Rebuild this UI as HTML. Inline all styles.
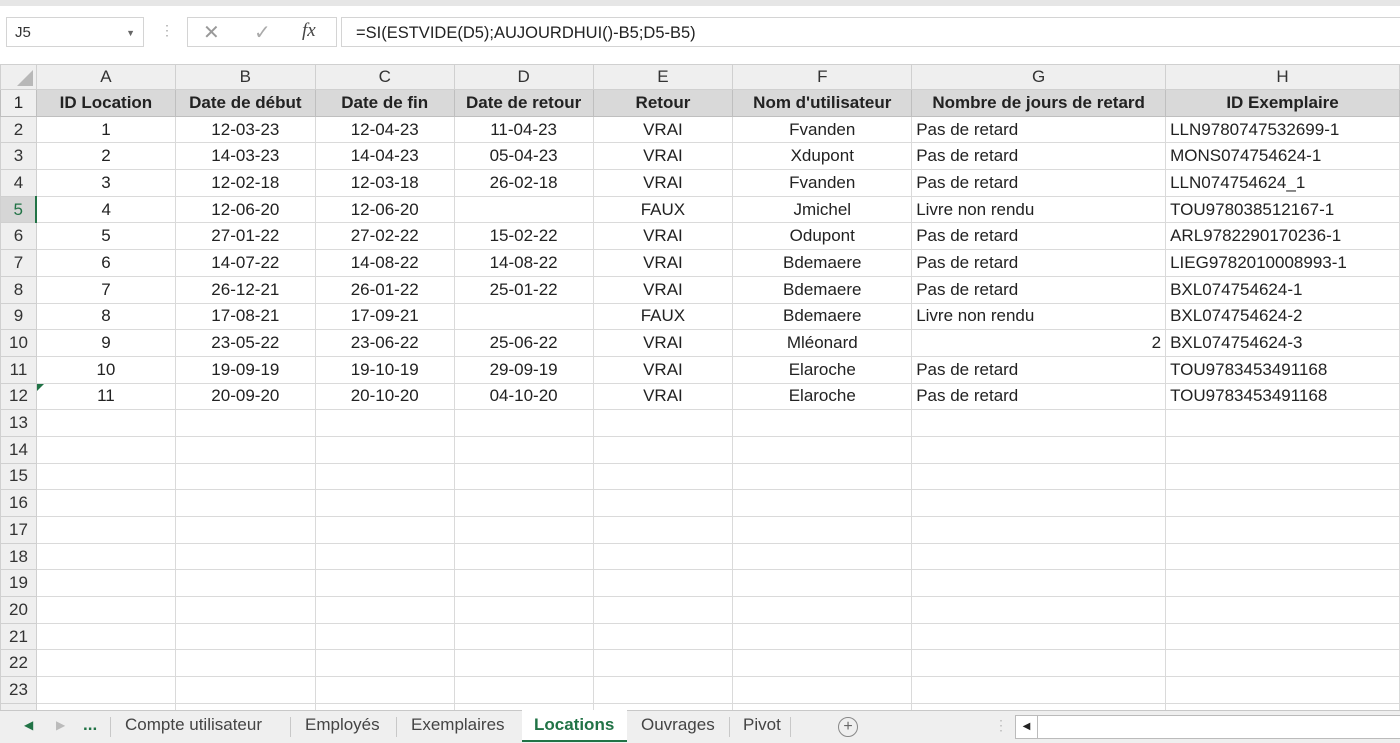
<!DOCTYPE html>
<html><head><meta charset="utf-8"><style>
body{margin:0;width:1400px;height:742px;overflow:hidden;background:#fff;font-family:"Liberation Sans",sans-serif;position:relative}
.top{position:absolute;left:0;top:0;width:1400px;height:64px;background:#fff}
.strip{position:absolute;left:0;top:0;width:1400px;height:6px;background:#e6e6e6}
.nb{position:absolute;left:6px;top:17px;width:138px;height:30px;border:1px solid #d4d4d4;background:#fff;font-size:15px;color:#333;line-height:30px;box-sizing:border-box;padding-left:8px}
.fb{position:absolute;top:17px;height:30px;border:1px solid #d4d4d4;background:#fff;box-sizing:border-box}
table{position:absolute;left:0;top:64px;border-collapse:collapse;table-layout:fixed;font-size:17px;color:#222}
td{border:1px solid #dadada;padding:0 4px;white-space:nowrap;overflow:hidden;text-align:center;height:26.7px;box-sizing:border-box;line-height:24px}
tr.ch td{background:#efefef;color:#333;height:25px;border-color:#d0d0d0;font-size:17px}
td.rh{background:#efefef;color:#333;border-color:#d0d0d0;padding:0;font-size:17px}
tr.h1 td{background:#d9d9d9;font-weight:bold;color:#222;border-color:#bfbfbf}
tr.h1 td.rh{background:#efefef;font-weight:normal}
td.l{text-align:left}
td.r{text-align:right}
.tabs{position:absolute;left:0;top:710px;width:1400px;height:32px;background:#efefef;border-top:1px solid #c8c8c8;font-size:17px;color:#444}
.tab{position:absolute;top:0;height:30px;line-height:28px}
.sep{position:absolute;top:6px;width:1px;height:20px;background:#c8c8c8}
</style></head><body>
<div class="top"></div><div class="strip"></div>
<div class="nb">J5<span style="position:absolute;right:8px;top:0;font-size:9px;color:#666">▼</span></div>
<div style="position:absolute;left:160px;top:22px;color:#aaa;font-size:14px">⋮</div>
<div class="fb" style="left:187px;width:150px"><span style="position:absolute;left:15px;top:2px;color:#999;font-size:20px">✕</span><span style="position:absolute;left:66px;top:2px;color:#aaa;font-size:20px">✓</span><span style="position:absolute;left:114px;top:2px;font-family:'Liberation Serif',serif;font-style:italic;font-size:19px;color:#444">fx</span></div>
<div class="fb" style="left:341px;width:1070px;font-size:16.5px;color:#222;line-height:30px;padding-left:14px">=SI(ESTVIDE(D5);AUJOURDHUI()-B5;D5-B5)</div>
<table>
<colgroup><col style="width:36px"><col style="width:139px"><col style="width:140px"><col style="width:139px"><col style="width:139px"><col style="width:140px"><col style="width:179px"><col style="width:254px"><col style="width:234px"></colgroup>
<tr class="ch"><td class="rh"><svg width="22" height="20" style="display:block;margin:2px 0 0 12px"><polygon points="20,2 20,18 4,18" fill="#b8b8b8"/></svg></td><td>A</td><td>B</td><td>C</td><td>D</td><td>E</td><td>F</td><td>G</td><td>H</td></tr>
<tr class="h1"><td class="rh">1</td><td>ID Location</td><td>Date de début</td><td>Date de fin</td><td>Date de retour</td><td>Retour</td><td>Nom d'utilisateur</td><td>Nombre de jours de retard</td><td>ID Exemplaire</td></tr>
<tr><td class="rh">2</td><td>1</td><td>12-03-23</td><td>12-04-23</td><td>11-04-23</td><td>VRAI</td><td>Fvanden</td><td class="l">Pas de retard</td><td class="l">LLN9780747532699-1</td></tr>
<tr><td class="rh">3</td><td>2</td><td>14-03-23</td><td>14-04-23</td><td>05-04-23</td><td>VRAI</td><td>Xdupont</td><td class="l">Pas de retard</td><td class="l">MONS074754624-1</td></tr>
<tr><td class="rh">4</td><td>3</td><td>12-02-18</td><td>12-03-18</td><td>26-02-18</td><td>VRAI</td><td>Fvanden</td><td class="l">Pas de retard</td><td class="l">LLN074754624_1</td></tr>
<tr><td class="rh" style="background:#d6d6d6;color:#217346;border-right:2px solid #217346">5</td><td>4</td><td>12-06-20</td><td>12-06-20</td><td></td><td>FAUX</td><td>Jmichel</td><td class="l">Livre non rendu</td><td class="l">TOU978038512167-1</td></tr>
<tr><td class="rh">6</td><td>5</td><td>27-01-22</td><td>27-02-22</td><td>15-02-22</td><td>VRAI</td><td>Odupont</td><td class="l">Pas de retard</td><td class="l">ARL9782290170236-1</td></tr>
<tr><td class="rh">7</td><td>6</td><td>14-07-22</td><td>14-08-22</td><td>14-08-22</td><td>VRAI</td><td>Bdemaere</td><td class="l">Pas de retard</td><td class="l">LIEG9782010008993-1</td></tr>
<tr><td class="rh">8</td><td>7</td><td>26-12-21</td><td>26-01-22</td><td>25-01-22</td><td>VRAI</td><td>Bdemaere</td><td class="l">Pas de retard</td><td class="l">BXL074754624-1</td></tr>
<tr><td class="rh">9</td><td>8</td><td>17-08-21</td><td>17-09-21</td><td></td><td>FAUX</td><td>Bdemaere</td><td class="l">Livre non rendu</td><td class="l">BXL074754624-2</td></tr>
<tr><td class="rh">10</td><td>9</td><td>23-05-22</td><td>23-06-22</td><td>25-06-22</td><td>VRAI</td><td>Mléonard</td><td class="r">2</td><td class="l">BXL074754624-3</td></tr>
<tr><td class="rh">11</td><td>10</td><td>19-09-19</td><td>19-10-19</td><td>29-09-19</td><td>VRAI</td><td>Elaroche</td><td class="l">Pas de retard</td><td class="l">TOU9783453491168</td></tr>
<tr><td class="rh">12</td><td style="position:relative">11<span style="position:absolute;left:0;top:0;width:0;height:0;border-top:7px solid #217346;border-right:7px solid transparent"></span></td><td>20-09-20</td><td>20-10-20</td><td>04-10-20</td><td>VRAI</td><td>Elaroche</td><td class="l">Pas de retard</td><td class="l">TOU9783453491168</td></tr>
<tr><td class="rh">13</td><td></td><td></td><td></td><td></td><td></td><td></td><td></td><td></td></tr>
<tr><td class="rh">14</td><td></td><td></td><td></td><td></td><td></td><td></td><td></td><td></td></tr>
<tr><td class="rh">15</td><td></td><td></td><td></td><td></td><td></td><td></td><td></td><td></td></tr>
<tr><td class="rh">16</td><td></td><td></td><td></td><td></td><td></td><td></td><td></td><td></td></tr>
<tr><td class="rh">17</td><td></td><td></td><td></td><td></td><td></td><td></td><td></td><td></td></tr>
<tr><td class="rh">18</td><td></td><td></td><td></td><td></td><td></td><td></td><td></td><td></td></tr>
<tr><td class="rh">19</td><td></td><td></td><td></td><td></td><td></td><td></td><td></td><td></td></tr>
<tr><td class="rh">20</td><td></td><td></td><td></td><td></td><td></td><td></td><td></td><td></td></tr>
<tr><td class="rh">21</td><td></td><td></td><td></td><td></td><td></td><td></td><td></td><td></td></tr>
<tr><td class="rh">22</td><td></td><td></td><td></td><td></td><td></td><td></td><td></td><td></td></tr>
<tr><td class="rh">23</td><td></td><td></td><td></td><td></td><td></td><td></td><td></td><td></td></tr>
<tr><td class="rh">24</td><td></td><td></td><td></td><td></td><td></td><td></td><td></td><td></td></tr>
</table>
<div class="tabs">
<span class="tab" style="left:24px;color:#217346;font-size:12px">◀</span>
<span class="tab" style="left:56px;color:#bbb;font-size:12px">▶</span>
<span class="tab" style="left:83px;color:#217346;font-weight:bold">...</span>
<div class="sep" style="left:110px"></div>
<span class="tab" style="left:125px">Compte utilisateur</span>
<div class="sep" style="left:290px"></div>
<span class="tab" style="left:305px">Employés</span>
<div class="sep" style="left:396px"></div>
<span class="tab" style="left:411px">Exemplaires</span>
<div style="position:absolute;left:522px;top:-1px;width:105px;height:30px;background:#fff;border-bottom:2px solid #217346"></div>
<span class="tab" style="left:534px;color:#217346;font-weight:bold">Locations</span>
<span class="tab" style="left:641px">Ouvrages</span>
<div class="sep" style="left:729px"></div>
<span class="tab" style="left:743px">Pivot</span>
<div class="sep" style="left:790px"></div>
<div style="position:absolute;left:838px;top:6px;width:18px;height:18px;border:1px solid #888;border-radius:50%;text-align:center;line-height:17px;font-size:16px;color:#666">+</div>
<span class="tab" style="left:994px;color:#bbb;font-size:14px">⋮</span>
<div style="position:absolute;left:1015px;top:4px;width:390px;height:22px;background:#fff;border:1px solid #bbb"></div>
<div style="position:absolute;left:1015px;top:4px;width:21px;height:22px;border:1px solid #bbb;text-align:center;font-size:10px;line-height:22px;color:#222">◀</div>
</div>
</body></html>
